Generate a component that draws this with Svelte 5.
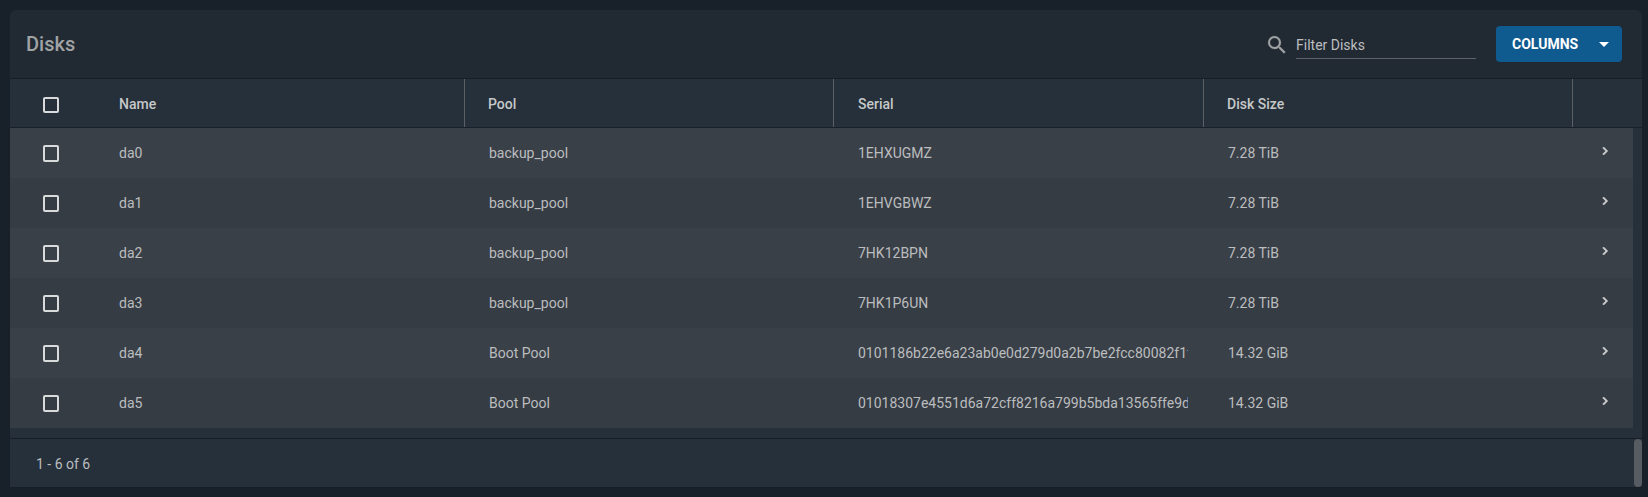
<script>
	const disks = [
		{ name: 'da0', pool: 'backup_pool', serial: '1EHXUGMZ', size: '7.28 TiB' },
		{ name: 'da1', pool: 'backup_pool', serial: '1EHVGBWZ', size: '7.28 TiB' },
		{ name: 'da2', pool: 'backup_pool', serial: '7HK12BPN', size: '7.28 TiB' },
		{ name: 'da3', pool: 'backup_pool', serial: '7HK1P6UN', size: '7.28 TiB' },
		{ name: 'da4', pool: 'Boot Pool', serial: '0101186b22e6a23ab0e0d279d0a2b7be2fcc80082f1f', size: '14.32 GiB' },
		{ name: 'da5', pool: 'Boot Pool', serial: '01018307e4551d6a72cff8216a799b5bda13565ffe9d', size: '14.32 GiB' }
	];
</script>

<div class="page">
	<div class="card">
		<div class="titlebar">
			<h1>Disks</h1>
			<div class="filter">
				<svg class="search" viewBox="0 0 24 24" width="24" height="24">
					<path
						fill="#a0a3a5"
						stroke="#a0a3a5"
						stroke-width="0.2"
						d="M15.5 14h-.79l-.28-.27A6.47 6.47 0 0 0 16 9.5 6.5 6.5 0 1 0 9.5 16c1.61 0 3.09-.59 4.23-1.57l.27.28v.79l5 4.99L20.49 19l-4.99-5zm-6 0C7.01 14 5 11.99 5 9.5S7.01 5 9.5 5 14 7.01 14 9.5 11.99 14 9.5 14z"
					/>
				</svg>
				<div class="input">Filter Disks</div>
			</div>
			<button class="columns">
				<span>COLUMNS</span>
				<i class="caret"></i>
			</button>
		</div>

		<div class="row head">
			<div class="check"><i class="box"></i></div>
			<div class="cell">Name</div>
			<div class="cell">Pool</div>
			<div class="cell">Serial</div>
			<div class="cell">Disk Size</div>
			<div class="cell last"></div>
		</div>

		<div class="body">
			{#each disks as d}
				<div class="row item">
					<div class="check"><i class="box"></i></div>
					<div class="cell">{d.name}</div>
					<div class="cell">{d.pool}</div>
					<div class="cell"><span class="clip">{d.serial}</span></div>
					<div class="cell">{d.size}</div>
					<div class="cell last">
						<svg viewBox="0 0 24 24" width="16" height="16">
							<path
								fill="#cfd0d1"
								stroke="#cfd0d1"
								stroke-width="1"
								d="M10 6 8.59 7.41 13.17 12l-4.58 4.59L10 18l6-6z"
							/>
						</svg>
					</div>
				</div>
			{/each}
		</div>

		<div class="footer">
			<span>1 - 6 of 6</span>
			<i class="thumb"></i>
		</div>
	</div>
</div>

<style>
	:global(body) {
		margin: 0;
		background: #18202a;
	}

	.page {
		width: 1648px;
		height: 497px;
		padding: 10px 6px 9px 10px;
		box-sizing: border-box;
		font-family: Roboto, sans-serif;
		overflow: hidden;
	}

	.card {
		height: 100%;
		background: #212932;
		border-radius: 6px 6px 0 0;
		display: flex;
		flex-direction: column;
	}

	.titlebar {
		height: 69px;
		flex: none;
		display: flex;
		align-items: center;
		padding: 0 20px 0 16px;
		box-sizing: border-box;
		border-bottom: 1px solid #171e26;
	}

	h1 {
		margin: 0;
		font-size: 20px;
		font-weight: 500;
		color: #a0a3a5;
		flex: 1;
	}

	.filter {
		display: flex;
		align-items: center;
		gap: 7px;
		margin-right: 20px;
	}

	.search {
		margin-top: 2px;
	}

	.input {
		width: 180px;
		height: 30px;
		line-height: 33px;
		box-sizing: border-box;
		border-bottom: 1px solid #5e6368;
		font-size: 14px;
		color: #bcbec0;
	}

	.columns {
		width: 126px;
		height: 36px;
		background: #0f5a8e;
		border: none;
		border-radius: 4px;
		color: #fff;
		font: 700 14px Roboto, sans-serif;
		display: flex;
		align-items: center;
		justify-content: space-between;
		padding: 0 13px 0 16px;
	}

	.caret {
		border-left: 5px solid transparent;
		border-right: 5px solid transparent;
		border-top: 5px solid #fff;
	}

	.row {
		display: grid;
		grid-template-columns: 94px 361px 369px 370px 369px 1fr;
		align-items: center;
	}

	.head {
		height: 49px;
		flex: none;
		background: #25303a;
		border-bottom: 1px solid #192029;
		font-size: 14px;
		font-weight: 500;
		color: #c6c8c9;
		box-sizing: border-box;
	}

	.head .box {
		height: 16px;
		margin-top: 4px;
	}

	.head .cell {
		height: 100%;
		display: flex;
		align-items: center;
		border-right: 1px solid #5a6066;
		box-sizing: border-box;
		padding: 2px 0 0 23px;
	}

	.head .cell:nth-child(2) {
		padding-left: 15px;
	}

	.head .cell:nth-child(4) {
		padding-left: 24px;
	}

	.head .cell.last {
		border-right: none;
	}

	.check {
		display: flex;
		justify-content: center;
		width: 82px;
		box-sizing: border-box;
	}

	.box {
		width: 16px;
		height: 17px;
		box-sizing: border-box;
		border: 2px solid #d9dadb;
		border-radius: 2px;
		display: block;
	}

	.body {
		flex: 1;
		background: #25303a;
	}

	.item {
		height: 50px;
		width: 1623px;
		font-size: 14px;
		color: #bbbdbf;
		background: #3a4048;
		box-sizing: border-box;
	}

	.item:nth-child(even) {
		background: #363c44;
	}

	.item .cell {
		padding-left: 24px;
		white-space: nowrap;
		overflow: hidden;
	}

	.item .cell:nth-child(2) {
		padding-left: 15px;
	}

	.clip {
		display: block;
		width: 330px;
		overflow: hidden;
	}

	.item .last {
		display: flex;
		padding-bottom: 4px;
	}

	.footer {
		height: 50px;
		flex: none;
		position: relative;
		background: #25303a;
		border-top: 1px solid #171e26;
		border-bottom: 1px solid #171e26;
		box-sizing: border-box;
		display: flex;
		align-items: center;
		padding: 2px 0 0 26px;
		font-size: 14px;
		color: #bbbdbf;
	}

	.thumb {
		position: absolute;
		right: 0;
		top: 0;
		bottom: 0;
		width: 8px;
		border-radius: 4px;
		background: #565c62;
	}
</style>
